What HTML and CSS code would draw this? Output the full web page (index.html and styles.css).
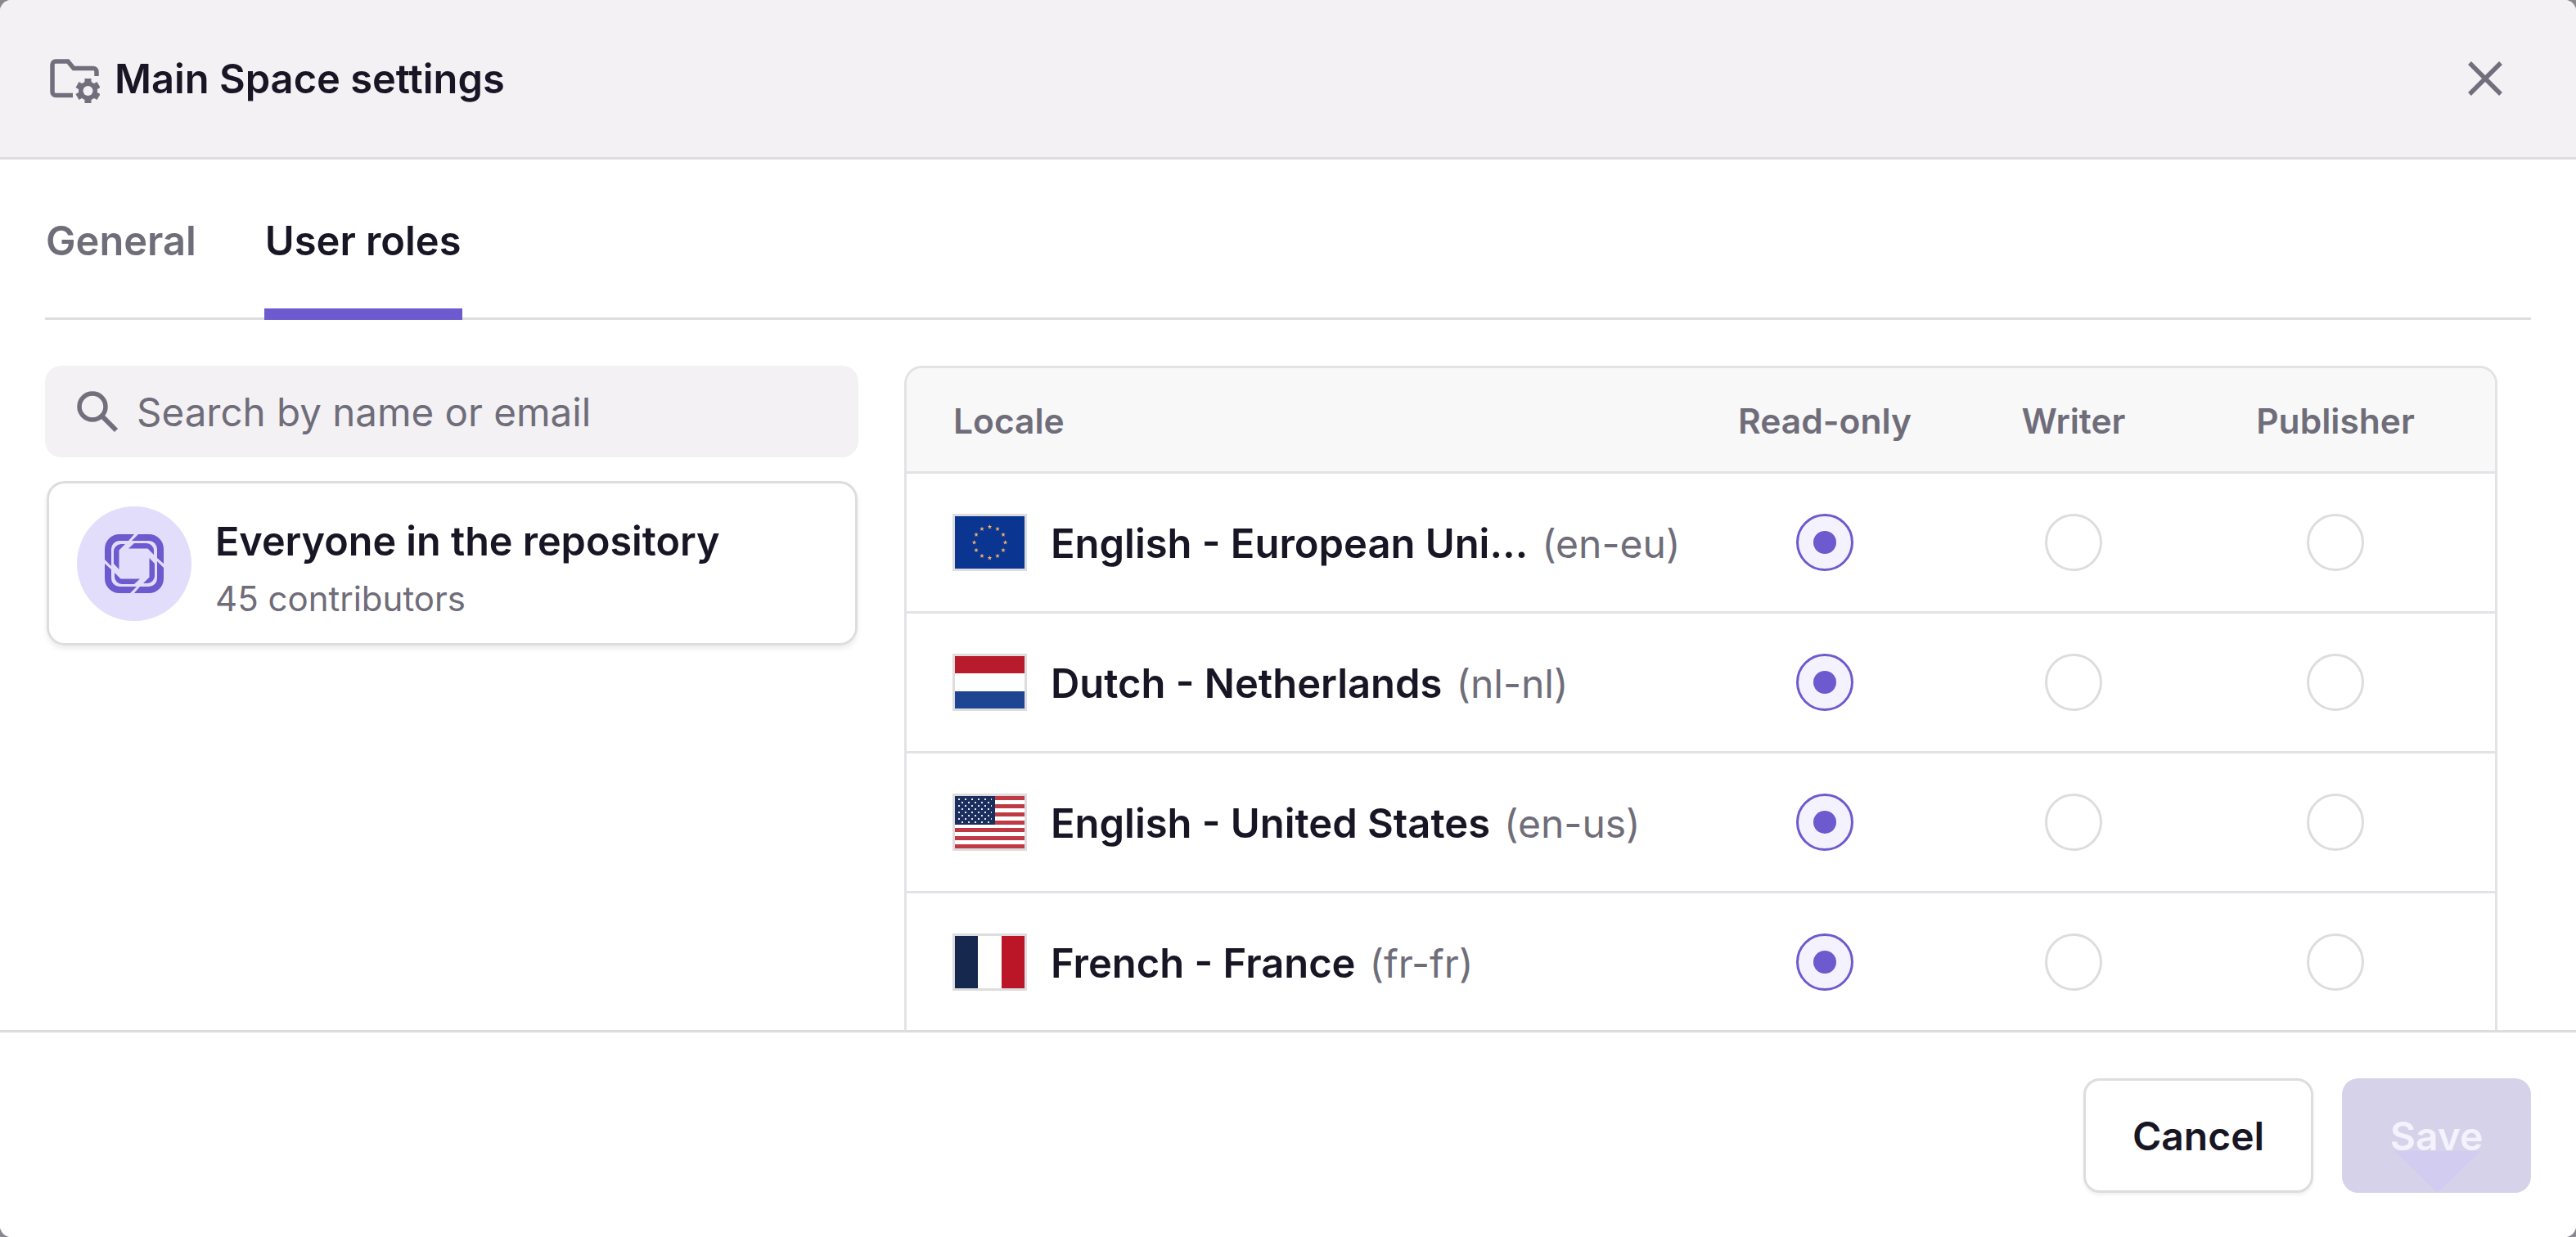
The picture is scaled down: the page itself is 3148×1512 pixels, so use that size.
FILE: index.html
```html
<!DOCTYPE html>
<html lang="en">
<head>
    <meta charset="UTF-8">
    <meta name="viewport" content="width=device-width, initial-scale=1.0">
    <title>Main Space settings</title>
    <link rel="stylesheet" href="styles.css">
</head>
<body>
    <div class="modal">
        <header class="modal-header">
            <div class="modal-title">
                <svg class="folder-icon" viewBox="0 0 61 54" fill="none">
                    <path d="M28 44.500H7A4 4 0 0 1 3 40.500V7A4 4 0 0 1 7 3H22L29 11.500H53A4 4 0 0 1 57 15.500V21" stroke="#716f7c" stroke-width="5.500"/>
                    <g fill="#716f7c">
                        <circle cx="46.500" cy="39" r="11.500"/>
                        <rect x="42.500" y="24" width="8" height="30"/>
                        <rect x="42.500" y="24" width="8" height="30" transform="rotate(60 46.500 39)"/>
                        <rect x="42.500" y="24" width="8" height="30" transform="rotate(120 46.500 39)"/>
                    </g>
                    <circle cx="46.500" cy="39" r="6" fill="#f3f1f4"/>
                </svg>
                <span>Main Space settings</span>
            </div>
            <svg class="close-icon" viewBox="0 0 42 42" fill="none">
                <path d="M2 2l38 38M40 2L2 40" stroke="#716f7c" stroke-width="5.500"/>
            </svg>
        </header>

        <div class="modal-body">
            <nav class="tabs">
                <a class="tab">General</a>
                <a class="tab active">User roles</a>
            </nav>

            <div class="columns">
                <div class="people">
                    <div class="search">
                        <svg class="search-icon" viewBox="0 0 52 52" fill="none">
                            <circle cx="20" cy="20" r="16" stroke="#716f7c" stroke-width="5.500"/>
                            <path d="M31 31l18 18" stroke="#716f7c" stroke-width="6"/>
                        </svg>
                        <span>Search by name or email</span>
                    </div>
                    <div class="person-card">
                        <div class="avatar">
                            <svg viewBox="0 0 72 72" fill="#6c5ace">
                                <g id="knot">
                                    <path d="M0 31V18A18 18 0 0 1 18 0H36L29 8H18A10 10 0 0 0 8 18V39Z"/>
                                    <path d="M11 36V21A9 9 0 0 1 20 12H25L17.500 19.500V43Z"/>
                                </g>
                                <use href="#knot" transform="rotate(90 36 36)"/>
                                <use href="#knot" transform="rotate(180 36 36)"/>
                                <use href="#knot" transform="rotate(270 36 36)"/>
                            </svg>
                        </div>
                        <div class="person-info">
                            <div class="person-name">Everyone in the repository</div>
                            <div class="person-sub">45 contributors</div>
                        </div>
                    </div>
                </div>

                <div class="locales">
                    <div class="locale-row locale-head">
                        <div class="locale-cell">Locale</div>
                        <div class="radio-cell">Read-only</div>
                        <div class="radio-cell">Writer</div>
                        <div class="radio-cell">Publisher</div>
                    </div>

                    <div class="locale-row">
                        <div class="locale-cell">
                            <svg class="flag" viewBox="0 0 85 64">
                                <rect width="85" height="64" fill="#0a3591"/>
                                <defs>
                                    <polygon id="star" points="0,-3 .7,-.9 2.850,-.9 1.100,.35 1.750,2.400 0,1.150 -1.750,2.400 -1.100,.35 -2.850,-.9 -.7,-.9"/>
                                </defs>
                                <g fill="#f3b268">
                                    <use href="#star" x="42.500" y="13"/>
                                    <use href="#star" x="52" y="15.500"/>
                                    <use href="#star" x="59" y="22.500"/>
                                    <use href="#star" x="61.500" y="32"/>
                                    <use href="#star" x="59" y="41.500"/>
                                    <use href="#star" x="52" y="48.500"/>
                                    <use href="#star" x="42.500" y="51"/>
                                    <use href="#star" x="33" y="48.500"/>
                                    <use href="#star" x="26" y="41.500"/>
                                    <use href="#star" x="23.500" y="32"/>
                                    <use href="#star" x="26" y="22.500"/>
                                    <use href="#star" x="33" y="15.500"/>
                                </g>
                            </svg>
                            <span class="locale-name">English - European Uni…</span>
                            <span class="locale-code">(en-eu)</span>
                        </div>
                        <div class="radio-cell"><span class="radio checked"></span></div>
                        <div class="radio-cell"><span class="radio"></span></div>
                        <div class="radio-cell"><span class="radio"></span></div>
                    </div>

                    <div class="locale-row">
                        <div class="locale-cell">
                            <svg class="flag" viewBox="0 0 85 64">
                                <rect width="85" height="64" fill="#fff"/>
                                <rect width="85" height="21" fill="#b81c2c"/>
                                <rect y="43" width="85" height="21" fill="#1e4592"/>
                            </svg>
                            <span class="locale-name">Dutch - Netherlands</span>
                            <span class="locale-code">(nl-nl)</span>
                        </div>
                        <div class="radio-cell"><span class="radio checked"></span></div>
                        <div class="radio-cell"><span class="radio"></span></div>
                        <div class="radio-cell"><span class="radio"></span></div>
                    </div>

                    <div class="locale-row">
                        <div class="locale-cell">
                            <svg class="flag" viewBox="0 0 85 64">
                                <rect width="85" height="64" fill="#fff"/>
                                <g fill="#bf3a45">
                                    <rect width="85" height="5"/><rect y="10" width="85" height="5"/><rect y="20" width="85" height="5"/><rect y="30" width="85" height="5"/><rect y="39" width="85" height="5"/><rect y="49" width="85" height="5"/><rect y="59" width="85" height="5"/>
                                </g>
                                <rect width="49" height="35" fill="#1a2f5e"/>
                                <path d="M4 4h41M8 8h37M4 12h41M8 16h37M4 20h41M8 24h37M4 28h41M8 32h37" stroke="#e8e8ee" stroke-width="2" stroke-dasharray="2 6"/>
                            </svg>
                            <span class="locale-name">English - United States</span>
                            <span class="locale-code">(en-us)</span>
                        </div>
                        <div class="radio-cell"><span class="radio checked"></span></div>
                        <div class="radio-cell"><span class="radio"></span></div>
                        <div class="radio-cell"><span class="radio"></span></div>
                    </div>

                    <div class="locale-row">
                        <div class="locale-cell">
                            <svg class="flag" viewBox="0 0 85 64">
                                <rect width="85" height="64" fill="#fff"/>
                                <rect width="28" height="64" fill="#17284f"/>
                                <rect x="57" width="28" height="64" fill="#ba1628"/>
                            </svg>
                            <span class="locale-name">French - France</span>
                            <span class="locale-code">(fr-fr)</span>
                        </div>
                        <div class="radio-cell"><span class="radio checked"></span></div>
                        <div class="radio-cell"><span class="radio"></span></div>
                        <div class="radio-cell"><span class="radio"></span></div>
                    </div>
                </div>
            </div>
        </div>

        <footer class="modal-footer">
            <button class="btn btn-cancel">Cancel</button>
            <button class="btn btn-save"><span>Save</span></button>
        </footer>
    </div>
</body>
</html>
```

FILE: styles.css
```css
/* Dark page showing only at the rounded corners */
body {
    margin: 0;
    height: 1512px;
    overflow: hidden;
    background: #8a8992;
    font-family: Inter, "Noto Sans", sans-serif;
    color: #181624;
}

.modal {
    height: 1512px;
    display: flex;
    flex-direction: column;
    background: #fff;
    border-radius: 14px;
    overflow: hidden;
}

/* Header */
.modal-header {
    flex: none;
    height: 192px;
    display: flex;
    align-items: center;
    justify-content: space-between;
    padding: 0 90px 0 61px;
    background: #f3f1f4;
    border-bottom: 3px solid #dddddf;
}

.modal-title {
    display: flex;
    align-items: center;
    gap: 18px;
    font-size: 48.800px;
    font-weight: 600;
}

.folder-icon {
    width: 61px;
    height: 54px;
    margin-top: 6px;
}

.close-icon {
    width: 42px;
    height: 42px;
}

/* Body */
.modal-body {
    flex: 1;
    min-height: 0;
    overflow: hidden;
    padding: 0 55px;
}

.tabs {
    height: 196px;
    box-sizing: border-box;
    display: flex;
    gap: 82px;
    border-bottom: 3px solid #dddddf;
}

.tab {
    height: 196px;
    box-sizing: border-box;
    padding: 70px 1px 0;
    font-size: 48.800px;
    font-weight: 600;
    color: #6f6d79;
}

.tab.active {
    color: #181624;
    border-bottom: 14px solid #6c5ace;
}

.columns {
    display: flex;
    gap: 56px;
    padding-top: 56px;
}

.people {
    flex: none;
    width: 994px;
    display: flex;
    flex-direction: column;
    gap: 29px;
}

.search {
    height: 112px;
    display: flex;
    align-items: center;
    gap: 22px;
    padding: 0 38px;
    border-radius: 20px;
    background: #f3f1f4;
    font-size: 47.500px;
    color: #6f6d79;
}

.search-icon {
    width: 52px;
    height: 52px;
}

.person-card {
    height: 201px;
    box-sizing: border-box;
    margin: 0 1px 0 2px;
    display: flex;
    align-items: center;
    gap: 29px;
    padding: 0 34px;
    border: 3px solid #dddddf;
    border-radius: 22px;
    box-shadow: 0 4px 6px rgba(0, 0, 0, 0.08);
}

.avatar {
    flex: none;
    width: 140px;
    height: 140px;
    display: flex;
    align-items: center;
    justify-content: center;
    border-radius: 50%;
    background: #e2ddfb;
}

.avatar svg {
    width: 72px;
    height: 72px;
}

.person-info {
    padding-top: 12px;
}

.person-name {
    font-size: 48.500px;
    font-weight: 600;
    margin-bottom: 15px;
}

.person-sub {
    font-size: 42px;
    color: #6f6d79;
}

/* Locale table, cut off by the footer */
.locales {
    flex: none;
    width: 1947px;
    height: 900px;
    box-sizing: border-box;
    border: 3px solid #e3e2e6;
    border-radius: 22px 22px 0 0;
    overflow: hidden;
}

.locale-row {
    display: grid;
    grid-template-columns: 943px 358px 250px 390px;
    height: 171px;
    box-sizing: border-box;
    border-bottom: 3px solid #e3e2e6;
}

.locale-head {
    height: 129px;
    padding-top: 2px;
    background: #f8f8f9;
    font-size: 42.500px;
    font-weight: 600;
    color: #6f6d79;
}

.locale-cell {
    display: flex;
    align-items: center;
    padding-left: 56px;
    font-size: 48.900px;
}

.locale-head .locale-cell {
    padding-left: 57px;
    font-size: 42.500px;
}

.radio-cell {
    display: flex;
    align-items: center;
    justify-content: center;
}

.flag {
    flex: none;
    width: 85px;
    height: 64px;
    border: 3px solid #dddddf;
    margin-right: 29px;
}

.locale-name {
    padding-top: 3px;
    font-weight: 600;
    white-space: nowrap;
}

.locale-code {
    padding-top: 3px;
    margin-left: 17px;
    font-size: 48px;
    color: #6f6d79;
    white-space: nowrap;
}

.radio {
    width: 70px;
    height: 70px;
    box-sizing: border-box;
    border: 3px solid #dddddf;
    border-radius: 50%;
    background: #fff;
    display: flex;
    align-items: center;
    justify-content: center;
}

.radio.checked {
    border-color: #6c5ace;
    background: #f5f2ff;
}

.radio.checked::after {
    content: "";
    width: 28px;
    height: 28px;
    border-radius: 50%;
    background: #6c5ace;
}

/* Footer */
.modal-footer {
    flex: none;
    height: 253px;
    box-sizing: border-box;
    display: flex;
    justify-content: flex-end;
    align-items: flex-start;
    gap: 35px;
    padding: 56px 55px 0 0;
    border-top: 3px solid #dddddf;
    background: #fff;
    position: relative;
}

.btn {
    height: 140px;
    box-sizing: border-box;
    border-radius: 20px;
    font-family: inherit;
    font-size: 48px;
    font-weight: 600;
}

.btn-cancel {
    width: 281px;
    border: 3px solid #dddddf;
    background: #fff;
    color: #181624;
    box-shadow: 0 3px 4px rgba(0, 0, 0, 0.06);
}

.btn-save {
    position: relative;
    width: 231px;
    border: none;
    background: #d6d2ea;
    color: #f4f2fd;
}

/* Small pointer behind the disabled label */
.btn-save::before {
    content: "";
    position: absolute;
    left: 64px;
    bottom: 0;
    width: 105px;
    height: 51px;
    background: #d2ccf1;
    clip-path: polygon(0 0, 100% 0, 50% 100%);
}

.btn-save span {
    position: relative;
}
```
